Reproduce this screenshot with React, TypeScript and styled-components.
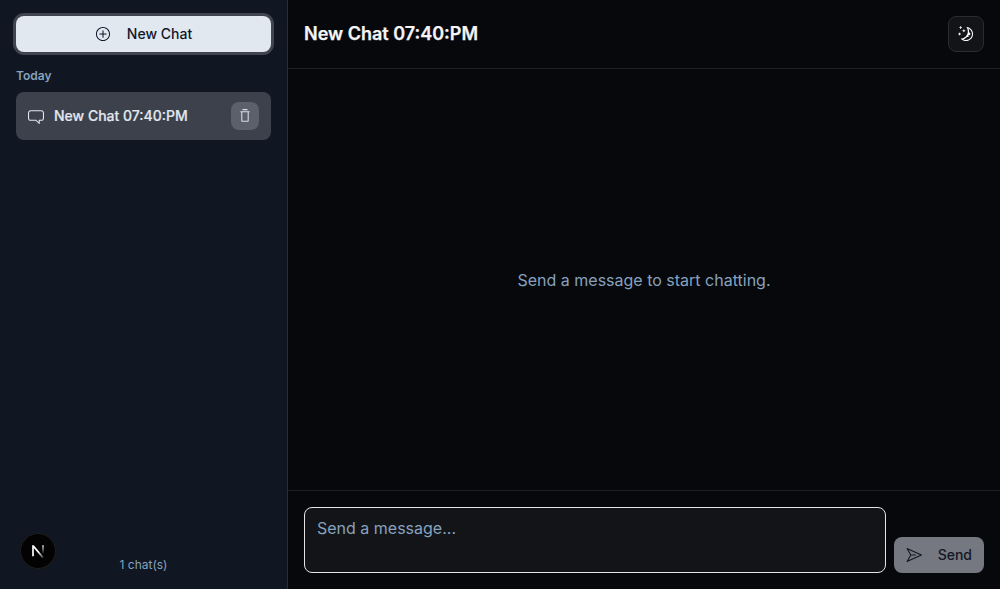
import React from "react";
import styled, { createGlobalStyle } from "styled-components";
import { RxChatBubble, RxMoon, RxPaperPlane, RxPlusCircled, RxTrash } from "react-icons/rx";

const GlobalStyle = createGlobalStyle`
  *, *::before, *::after { box-sizing: border-box; }
  body { margin: 0; background: #07080c; }
  button, textarea { font: inherit; margin: 0; }
  h1, h2, p { margin: 0; }
`;

const Shell = styled.div`
  display: grid;
  grid-template-columns: 288px 1fr;
  height: 100vh;
  overflow: hidden;
  font-family: Inter, sans-serif;
  font-size: 16px;
  line-height: 24px;
  color: #f4f4f6;
`;

const Sidebar = styled.aside`
  display: flex;
  flex-direction: column;
  padding: 16px;
  background: #111722;
  border-right: 1px solid #292d36;
`;

const NewChatButton = styled.button`
  display: flex;
  align-items: center;
  justify-content: center;
  gap: 16px;
  height: 36px;
  flex: none;
  border: 0;
  border-radius: 8px;
  background: #e2e8f0;
  box-shadow: 0 0 0 3px #3f4450;
  color: #0f172a;
  font-size: 14px;
  font-weight: 500;
  line-height: 20px;
`;

const GroupLabel = styled.h2`
  margin-top: 16px;
  font-size: 12px;
  font-weight: 600;
  line-height: 16px;
  color: #86a2be;
`;

const ChatRow = styled.div`
  display: flex;
  align-items: center;
  gap: 10px;
  height: 48px;
  margin-top: 8px;
  padding: 0 12px;
  border-radius: 8px;
  background: #3d414b;
  color: #e2e8f0;
`;

const ChatName = styled.span`
  flex: 1;
  font-size: 14px;
  font-weight: 500;
  line-height: 20px;
  -webkit-text-stroke: 0.2px currentColor;
`;

const DeleteButton = styled.button`
  display: grid;
  place-items: center;
  width: 28px;
  height: 28px;
  padding: 0;
  border: 0;
  border-radius: 8px;
  background: #5b606b;
  color: #d9dee7;
`;

const SidebarFooter = styled.footer`
  margin-top: auto;
  text-align: center;
  font-size: 12px;
  line-height: 16px;
  color: #86a2be;
`;

const DevBadge = styled.div`
  position: fixed;
  left: 20px;
  bottom: 20px;
  display: grid;
  place-items: center;
  width: 36px;
  height: 36px;
  border-radius: 50%;
  background: #030303;
  box-shadow: inset 0 0 0 1px #202020;
`;

const Main = styled.main`
  display: grid;
  grid-template-rows: 69px 1fr 99px;
  min-width: 0;
  background: #07080c;
`;

const Header = styled.header`
  display: flex;
  align-items: center;
  justify-content: space-between;
  padding: 0 16px;
  border-bottom: 1px solid #1e1f23;
`;

const Title = styled.h1`
  font-size: 18px;
  font-weight: 600;
  line-height: 28px;
  -webkit-text-stroke: 0.25px currentColor;
`;

const ThemeButton = styled.button`
  display: grid;
  place-items: center;
  width: 36px;
  height: 36px;
  padding: 0;
  border: 1px solid #2a2b2f;
  border-radius: 8px;
  background: #131418;
  color: #f8fafc;
`;

const EmptyState = styled.section`
  display: grid;
  place-items: center;
  color: #86a2be;
`;

const Composer = styled.form`
  display: flex;
  align-items: flex-end;
  gap: 8px;
  padding: 16px;
  border-top: 1px solid #1e1f23;
`;

const MessageInput = styled.textarea`
  display: block;
  flex: 1;
  height: 66px;
  padding: 8px 12px;
  border: 1px solid #e3e4e6;
  border-radius: 8px;
  outline: 0;
  resize: none;
  background: #131418;
  color: #f8fafc;
  &::placeholder { color: #86a2be; opacity: 1; }
`;

const SendButton = styled.button`
  display: flex;
  align-items: center;
  justify-content: space-between;
  width: 90px;
  height: 36px;
  padding: 0 12px;
  border: 0;
  border-radius: 8px;
  background: #757880;
  color: #121725;
  font-size: 14px;
  font-weight: 500;
  line-height: 20px;
`;

const NextLogo = () => (
  <svg width="14" height="14" viewBox="0 0 14 14" fill="none">
    <defs>
      <linearGradient id="diagonal" x1="7" y1="8" x2="12" y2="13.5" gradientUnits="userSpaceOnUse">
        <stop stopColor="#fff" />
        <stop offset="1" stopColor="#fff" stopOpacity="0.25" />
      </linearGradient>
      <linearGradient id="stem" x1="0" y1="1.5" x2="0" y2="10" gradientUnits="userSpaceOnUse">
        <stop stopColor="#fff" stopOpacity="0.85" />
        <stop offset="1" stopColor="#fff" stopOpacity="0" />
      </linearGradient>
    </defs>
    <path d="M2 12.3V2.2h.4L12 13.6" stroke="url(#diagonal)" strokeWidth="1.7" />
    <path d="M12 1.3v8.7" stroke="url(#stem)" strokeWidth="1.6" />
  </svg>
);

export default function App() {
  return (
    <Shell>
      <GlobalStyle />
      <Sidebar>
        <NewChatButton><RxPlusCircled size={16} />New Chat</NewChatButton>
        <GroupLabel>Today</GroupLabel>
        <ChatRow>
          <RxChatBubble size={16} />
          <ChatName>New Chat 07:40:PM</ChatName>
          <DeleteButton aria-label="Delete chat"><RxTrash size={16} /></DeleteButton>
        </ChatRow>
        <SidebarFooter>1 chat(s)</SidebarFooter>
      </Sidebar>
      <Main>
        <Header>
          <Title>New Chat 07:40:PM</Title>
          <ThemeButton aria-label="Toggle theme"><RxMoon size={16} /></ThemeButton>
        </Header>
        <EmptyState><p>Send a message to start chatting.</p></EmptyState>
        <Composer>
          <MessageInput placeholder="Send a message..." />
          <SendButton type="button"><RxPaperPlane size={16} />Send</SendButton>
        </Composer>
      </Main>
      <DevBadge><NextLogo /></DevBadge>
    </Shell>
  );
}
